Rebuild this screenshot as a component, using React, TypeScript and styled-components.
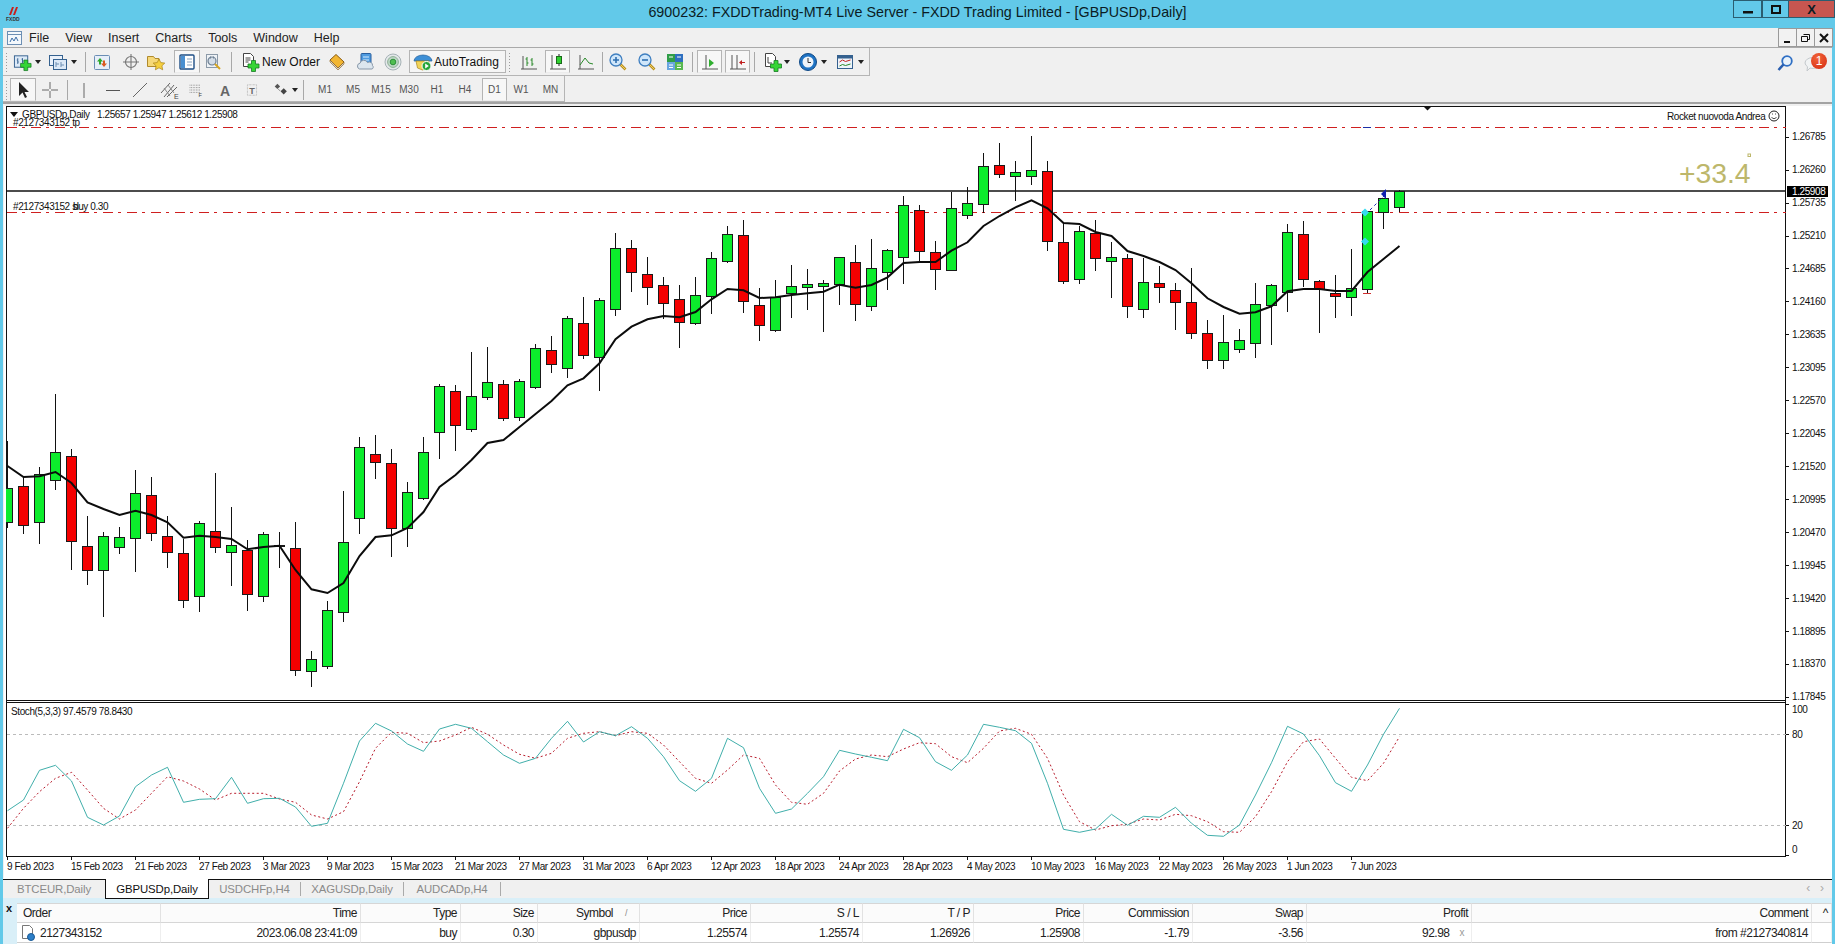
import styled, { createGlobalStyle } from 'styled-components';
import type { ReactNode } from 'react';

const GlobalStyle = createGlobalStyle`
  html, body { margin: 0; padding: 0; overflow: hidden; background: #62c9e9; }
  * { box-sizing: border-box; }
`;

const FONT = '"Liberation Sans", Arial, sans-serif';

const Win = styled.div`
  width: 1835px;
  height: 944px;
  background: #62c9e9;
  font-family: ${FONT};
  color: #111;
  display: flex;
  flex-direction: column;
  overflow: hidden;
`;
const TitleBar = styled.div`
  height: 28px;
  padding-bottom: 4px;
  position: relative;
  display: flex;
  align-items: center;
  justify-content: center;
  font-size: 14.3px;
  color: #0b1c24;
`;
const TitleLogo = styled.div`
  position: absolute;
  left: 5px;
  top: 6px;
`;
const WinBtns = styled.div`
  position: absolute;
  right: 0;
  top: 0;
  display: flex;
`;
const WinBtn = styled.div<{ $w: number; $close?: boolean }>`
  width: ${(p) => p.$w}px;
  height: 18px;
  background: ${(p) => (p.$close ? '#c75650' : '#62c9e9')};
  border: 1px solid #2b5d70;
  border-left-width: ${(p) => (p.$close ? 0 : 1)}px;
  display: flex;
  align-items: center;
  justify-content: center;
  font-size: 13px;
  font-weight: bold;
`;
const Inner = styled.div`
  flex: 1;
  margin: 0 3px;
  background: #f0f0f0;
  display: flex;
  flex-direction: column;
  min-height: 0;
`;
const MenuBar = styled.div`
  height: 20px;
  flex: none;
  border-bottom: 1px solid #a9a9a9;
  display: flex;
  align-items: center;
  gap: 16px;
  padding-left: 26px;
  position: relative;
  font-size: 12.5px;
  color: #222;
`;
const MenuIcon = styled.div`
  position: absolute;
  left: 3px;
  top: 1px;
`;
const MdiBtns = styled.div`
  position: absolute;
  right: -1px;
  top: 0;
  display: flex;
`;
const MdiBtn = styled.div`
  width: 19px;
  height: 19px;
  margin-left: -1px;
  border: 1px solid #9a9a9a;
  background: #f2f2f2;
  display: flex;
  align-items: center;
  justify-content: center;
`;
const ToolRow = styled.div<{ $h: number }>`
  height: ${(p) => p.$h}px;
  flex: none;
  display: flex;
  align-items: stretch;
  position: relative;
`;
const Toolbar = styled.div<{ $pt?: number }>`
  display: flex;
  align-items: center;
  padding-top: ${(p) => p.$pt ?? 0}px;
  border-right: 1px solid #b5b5b5;
  border-bottom: 1px solid #b5b5b5;
`;
const Grip = styled.div<{ $w: number }>`
  width: ${(p) => p.$w}px;
  height: 20px;
  background: radial-gradient(circle, #9a9a9a 0.7px, transparent 0.8px) 0 0 / 3px 3px;
  background-repeat: repeat-y;
  background-position: 2px 0;
`;
const Gap = styled.div<{ $w: number }>`
  width: ${(p) => p.$w}px;
  flex: none;
`;
const Sep = styled.div<{ $w: number }>`
  width: ${(p) => p.$w}px;
  flex: none;
  height: 20px;
  display: flex;
  justify-content: center;
  &::before {
    content: '';
    width: 1px;
    background: #a8a8a8;
  }
`;
const Tool = styled.div<{ $w: number; $on?: boolean; $mr?: number }>`
  width: ${(p) => p.$w}px;
  height: ${(p) => (p.$on ? '23px' : '22px')};
  margin-right: ${(p) => p.$mr ?? 0}px;
  flex: none;
  display: flex;
  align-items: center;
  justify-content: center;
  border: 1px solid ${(p) => (p.$on ? '#b4b4b4' : 'transparent')};
  border-bottom-color: ${(p) => (p.$on ? '#ececec' : 'transparent')};
  background: ${(p) => (p.$on ? '#f7f7f7' : 'transparent')};
  font-size: 10px;
  color: #555;
`;
const Caret = styled.div<{ $w: number }>`
  width: ${(p) => p.$w}px;
  flex: none;
  display: flex;
  justify-content: center;
  &::before {
    content: '';
    border: 3px solid transparent;
    border-top: 4px solid #222;
    border-bottom: 0;
  }
`;
const OrderBtn = styled.div`
  width: 88px;
  flex: none;
  display: flex;
  align-items: center;
  gap: 2px;
  padding-left: 4px;
  font-size: 12px;
`;
const AutoBtn = styled.div`
  width: 97px;
  height: 23px;
  flex: none;
  display: flex;
  align-items: center;
  gap: 1px;
  padding-left: 3px;
  border: 1px solid #b4b4b4;
  background: #f5f5f5;
  font-size: 12px;
`;
const RightIcons = styled.div`
  margin-left: auto;
  display: flex;
  align-items: center;
  gap: 8px;
  padding-right: 9px;
  padding-top: 3px;
  position: relative;
`;
const Badge = styled.div`
  position: absolute;
  right: 5px;
  top: 5px;
  width: 16px;
  height: 16px;
  border-radius: 50%;
  background: radial-gradient(circle at 40% 30%, #f2643a, #d42a10);
  color: #fff;
  font-size: 12px;
  line-height: 16px;
  text-align: center;
`;
const ChartWrap = styled.div`
  height: 776px;
  flex: none;
  border-top: 2px solid #a3a3a3;
`;
const ChartSvg = styled.svg`
  display: block;
`;
const ChartText = styled.text<{ $light?: boolean }>`
  font-family: ${FONT};
  font-size: 10px;
  letter-spacing: -0.4px;
  fill: ${(p) => (p.$light ? '#fff' : '#111')};
`;
const ProfitText = styled.text`
  font-family: ${FONT};
  font-size: 28.3px;
  fill: #bdb76b;
`;
const TabStrip = styled.div`
  height: 20px;
  flex: none;
  display: flex;
  align-items: center;
  border-top: 1px solid #fff;
  box-shadow: inset 0 1px 0 #111;
  font-size: 11.4px;
  letter-spacing: -0.1px;
  color: #8a8a8a;
  position: relative;
`;
const Tab = styled.div<{ $w: number; $on?: boolean; $sep?: boolean }>`
  width: ${(p) => p.$w}px;
  height: ${(p) => (p.$on ? '20px' : '14px')};
  flex: none;
  display: flex;
  align-items: center;
  justify-content: center;
  ${(p) => (p.$on ? 'color:#111;background:#fff;border:1px solid #111;border-top:0;margin-top:1px;' : '')}
  ${(p) => (p.$sep ? 'border-right:1px solid #aaa;' : '')}
`;
const TabArrows = styled.div`
  position: absolute;
  right: 8px;
  top: 2px;
  display: flex;
  gap: 10px;
  color: #aaa;
  font-size: 12px;
`;
const Terminal = styled.div`
  flex: 1;
  display: flex;
  background: #d9eff8;
  padding-top: 5px;
  min-height: 0;
`;
const CloseX = styled.div`
  width: 14px;
  flex: none;
  padding: 0 0 0 3px;
  font-size: 11px;
  font-weight: bold;
  line-height: 10px;
`;
const Table = styled.div`
  flex: 1;
  display: grid;
  grid-template-columns: 144px 200px 100px 77px 102px 111px 112px 111px 110px 109px 114px 165px 340px 1fr;
  grid-template-rows: 20px 20px;
  font-size: 12px;
  letter-spacing: -0.5px;
  background: #fff;
`;
const Head = styled.div<{ $left?: boolean; $pr?: number }>`
  display: flex;
  align-items: center;
  justify-content: ${(p) => (p.$left ? 'flex-start' : 'flex-end')};
  padding: 0 ${(p) => p.$pr ?? 3}px 0 6px;
  background: #fbfbfb;
  border-right: 1px solid #e2e2e2;
  border-bottom: 1px solid #d6d6d6;
  border-top: 1px solid #d6d6d6;
  white-space: nowrap;
  color: #222;
  position: relative;
`;
const SortMark = styled.span`
  position: absolute;
  right: 12px;
  color: #888;
  font-size: 9px;
`;
const Cell = styled(Head)`
  background: #fff;
  border-top: 0;
  border-right-color: #eeeeee;
  border-bottom-color: #cfcfcf;
`;
const OrderCell = styled(Cell)`
  padding-left: 3px;
  gap: 4px;
`;
const ProfitX = styled.span`
  color: #999;
  margin-left: 10px;
  margin-right: 4px;
  font-size: 10px;
`;

function I({ children, s = 20 }: { children: ReactNode; s?: number }) {
  return (
    <svg width={s} height={s} viewBox="0 0 20 20">
      {children}
    </svg>
  );
}

const Plus = ({ x, y }: { x: number; y: number }) => (
  <path
    d={`M${x + 3.5} ${y}h4v3.5h3.5v4h-3.5v3.5h-4v-3.5h-3.5v-4h3.5z`}
    fill="#35d535"
    stroke="#177a25"
    strokeWidth="0.8"
  />
);

const NewChartIcon = () => (
  <I>
    <rect x="1.5" y="3.5" width="14" height="12" fill="#dce9f7" stroke="#35618f" />
    <path d="M5 6v6M4 8h1M5 10h1M10 6v5M9 7h1M10 9h1" stroke="#35618f" fill="none" />
    <Plus x={8} y={8} />
  </I>
);
const ProfileIcon = () => (
  <I>
    <rect x="1.5" y="3.5" width="13" height="10" fill="#eaf1fa" stroke="#35618f" />
    <rect x="5.5" y="7.5" width="13" height="10" fill="#dce9f7" stroke="#35618f" />
    <path d="M8 10v5M8 12h3M13 10v5M13 13h3" stroke="#6f8fb2" fill="none" />
  </I>
);
const WatchIcon = () => (
  <I>
    <rect x="2.5" y="3.5" width="15" height="14" rx="1" fill="#e6eef8" stroke="#6a8db5" />
    <path d="M8 6l3 3.5H9v3H7v-3H5z" fill="#2ba82b" />
    <path d="M12 15l-3-3.5h2v-3h2v3h2z" fill="#d95a20" />
  </I>
);
const TargetIcon = () => (
  <I>
    <circle cx="10" cy="10" r="5.5" fill="none" stroke="#777" strokeWidth="1.2" />
    <path d="M10 2v16M2 10h16" stroke="#777" strokeWidth="1.1" />
  </I>
);
const FolderStarIcon = () => (
  <I>
    <path d="M1.5 4.5h6l1.5 2h4v8h-11.5z" fill="#f6d878" stroke="#b08a2c" />
    <path d="M13 7l1.8 3.6 4 .5-2.9 2.7.8 4-3.7-2-3.6 2 .7-4-2.9-2.7 4-.5z" fill="#f5cf3f" stroke="#a98218" strokeWidth="0.7" />
  </I>
);
const NavigatorIcon = () => (
  <I>
    <rect x="3" y="3" width="14" height="14" rx="1" fill="#fff" stroke="#1f4f86" strokeWidth="1.4" />
    <rect x="4" y="4" width="4" height="12" fill="#4a8fd0" />
    <path d="M10 7h5M10 10h5M10 13h5" stroke="#8aa3bf" />
  </I>
);
const TermIcon = () => (
  <I>
    <rect x="3.5" y="2.5" width="11" height="13" fill="#eef2f6" stroke="#8c9aa8" />
    <circle cx="9" cy="9" r="4" fill="#d5dee8" stroke="#6d7f92" strokeWidth="1.2" />
    <path d="M7.5 4.5v2M10.5 4.5v2" stroke="#6d7f92" />
    <path d="M12 12l5 5" stroke="#d7a520" strokeWidth="2" />
  </I>
);
const OrderIcon = () => (
  <I>
    <path d="M3.5 1.5h7l3 3v10h-10z" fill="#fff" stroke="#444" />
    <path d="M5.5 6h5M5.5 8h5M5.5 10h3" stroke="#444" />
    <Plus x={8} y={8.5} />
  </I>
);
const BookIcon = () => (
  <I>
    <path d="M3 8l6-5.5 8 7.5-6 6z" fill="#f2b632" stroke="#8a5a10" />
    <path d="M3 8v2l8 8 6-6v-2l-6 6z" fill="#d8d2c4" stroke="#8a5a10" strokeWidth="0.6" />
  </I>
);
const MarketIcon = () => (
  <I>
    <rect x="5" y="1.5" width="10" height="12" rx="1" fill="#4f9be0" stroke="#2a5f9e" />
    <path d="M7 5h6M7 8h6" stroke="#d5ecff" />
    <path d="M3.5 17a3 3 0 0 1 .5-5.8 4 4 0 0 1 7.5-.6 3.2 3.2 0 0 1 5 3 2 2 0 0 1-.5 3.4z" fill="#dce6ee" stroke="#8797a8" />
  </I>
);
const SignalIcon = () => (
  <I>
    <circle cx="10" cy="10" r="8" fill="#e4e8ea" stroke="#a6b2b6" />
    <circle cx="10" cy="10" r="5.4" fill="#bcd6c4" stroke="#8fb096" />
    <circle cx="10" cy="10" r="2.8" fill="#4fbf4f" stroke="#2f8f3a" />
  </I>
);
const AutoIcon = () => (
  <I>
    <path d="M1 9a9 6 0 0 1 18 0z" fill="#3d8fd6" stroke="#1f5e9c" strokeWidth="0.7" />
    <path d="M3 9h13l-1.5 7-5 2-5-2z" fill="#f2d45a" stroke="#a9851c" strokeWidth="0.7" />
    <circle cx="13.5" cy="14" r="4.5" fill="#27a53a" stroke="#fff" />
    <path d="M12.2 11.6l3.6 2.4-3.6 2.4z" fill="#fff" />
  </I>
);
const BarsIcon = () => (
  <I>
    <path d="M2 17h16M4 4v13" stroke="#555" fill="none" />
    <path d="M8 5v9M6.5 7h1.5M8 11h1.5M13 6v8M11.5 8h1.5M13 12h1.5" stroke="#2a8a2a" fill="none" />
  </I>
);
const CandlesIcon = () => (
  <I>
    <path d="M2 17h16M4 3v14" stroke="#555" fill="none" />
    <path d="M11 2v12" stroke="#222" />
    <rect x="8.5" y="4.5" width="5" height="7" fill="#2fd02f" stroke="#1a6a1a" />
  </I>
);
const LineIcon = () => (
  <I>
    <path d="M2 17h16M4 3v14" stroke="#555" fill="none" />
    <path d="M4 13l5-7 4 5 4 1" stroke="#2a8a2a" fill="none" />
  </I>
);
const ZoomIcon = ({ minus }: { minus?: boolean }) => (
  <I>
    <path d="M12 12l5.5 5.5" stroke="#b98f1e" strokeWidth="2.6" />
    <path d="M12 12l5.5 5.5" stroke="#f0d060" strokeWidth="1" />
    <circle cx="8" cy="8" r="6" fill="#cfe6fa" stroke="#3f7fc0" strokeWidth="1.3" />
    <path d={minus ? 'M5 8h6' : 'M5 8h6M8 5v6'} stroke="#2f6fb0" strokeWidth="1.6" />
  </I>
);
const TileIcon = () => (
  <I>
    <rect x="2" y="2" width="8" height="8" fill="#2f9e48" />
    <rect x="10" y="2" width="8" height="8" fill="#2e6fc0" />
    <rect x="2" y="10" width="8" height="8" fill="#6aa6e0" />
    <rect x="10" y="10" width="8" height="8" fill="#58b84f" />
    <path d="M4 5h4M12 5h4M4 13h4M12 13h4M4 15.5h4M12 15.5h4" stroke="#fff" />
  </I>
);
const ScrollIcon = () => (
  <I>
    <path d="M2 17h16M6 3v14" stroke="#555" fill="none" />
    <path d="M9 7l5 4-5 4z" fill="#2faf2f" />
  </I>
);
const ShiftIcon = () => (
  <I>
    <path d="M2 17h16M4 3v14M9 3v14" stroke="#555" fill="none" />
    <path d="M17 10.5h-4" stroke="#c02020" />
    <path d="M11 10.5l3-2.5v5z" fill="#c02020" />
  </I>
);
const AddIndIcon = () => (
  <I>
    <path d="M3.5 1.5h7l3 3v10h-10z" fill="#fff" stroke="#444" />
    <path d="M6 5v6h4" stroke="#444" fill="none" />
    <Plus x={8.5} y={8.5} />
  </I>
);
const ClockIcon = () => (
  <I>
    <circle cx="10" cy="10" r="8.5" fill="#1f73c4" stroke="#114a86" />
    <circle cx="10" cy="10" r="5.5" fill="#eef4fa" />
    <path d="M10 6v4.5h3" stroke="#333" fill="none" />
  </I>
);
const TemplateIcon = () => (
  <I>
    <rect x="2.5" y="3.5" width="15" height="13" fill="#eef4fa" stroke="#35618f" />
    <rect x="3" y="4" width="14" height="2.5" fill="#35618f" />
    <path d="M4.5 10l3-2 3 1.5 5-1.5" stroke="#c02020" fill="none" />
    <path d="M4.5 14l3-1.5 3 1 5-1.5" stroke="#2a8a2a" fill="none" />
  </I>
);
const CursorIcon = () => (
  <I>
    <path d="M6 2v14l3.5-3.5 2.5 5.5 2-1-2.5-5h4.5z" fill="#222" />
  </I>
);
const CrossIcon = () => (
  <I>
    <path d="M10 2v7M10 11v7M2 10h7M11 10h7" stroke="#666" />
  </I>
);
const VLineIcon = () => (
  <I>
    <path d="M10 3v15" stroke="#666" />
  </I>
);
const HLineIcon = () => (
  <I>
    <path d="M3 10.5h14" stroke="#555" />
  </I>
);
const TrendIcon = () => (
  <I>
    <path d="M3 17L17 3" stroke="#666" />
  </I>
);
const ChannelIcon = () => (
  <I>
    <path d="M1 13L10 3M4 17L14 5M7 17L17 7" stroke="#666" fill="none" />
    <path d="M4 8l6 8M8 5l6 8" stroke="#888" fill="none" />
    <text x="14" y="19" fontSize="7" fontFamily={FONT} fill="#444">E</text>
  </I>
);
const FiboIcon = () => (
  <I>
    <path d="M2 4h13M2 7h13M2 10h13M2 13h13" stroke="#777" strokeDasharray="1 1" />
    <text x="13" y="19" fontSize="7" fontFamily={FONT} fill="#444">F</text>
  </I>
);
const TextAIcon = () => (
  <I>
    <text x="10" y="15.5" fontSize="14" fontWeight="bold" textAnchor="middle" fontFamily={FONT} fill="#666">A</text>
  </I>
);
const LabelTIcon = () => (
  <I>
    <rect x="3.5" y="2.5" width="13" height="15" fill="none" stroke="#999" strokeDasharray="1 1" />
    <text x="10" y="15" fontSize="13" fontWeight="bold" textAnchor="middle" fontFamily={FONT} fill="#666">T</text>
  </I>
);
const ArrowsIcon = () => (
  <I>
    <path d="M6 3l3 3-3 3-3-3z" fill="#555" />
    <path d="M13 8l3.5 3.5-3.5 3.5-3.5-3.5z" fill="#444" />
    <path d="M7 9l2 2" stroke="#777" />
  </I>
);
const SearchIcon = () => (
  <I>
    <circle cx="12" cy="7" r="4.8" fill="#e8f2fb" stroke="#2f6fc4" strokeWidth="1.8" />
    <path d="M8.5 10.5L3.5 16" stroke="#2a5fb0" strokeWidth="2.6" />
  </I>
);
const BubbleIcon = () => (
  <I>
    <path d="M2 9a8 5.5 0 0 1 16 0 8 5.5 0 0 1-11 5l-3 3 .5-4.3A5.500 5.500 0 0 1 2 9z" fill="#f1f3f4" stroke="#c3c8cc" />
  </I>
);
const DocIcon = () => (
  <svg width="16" height="17" viewBox="0 0 16 17">
    <path d="M2.5 1.5h7l3 3v10h-10z" fill="#fff" stroke="#777" />
    <circle cx="11" cy="13" r="3.5" fill="#2c7fc8" stroke="#1a5a96" />
  </svg>
);
const AppMenuIcon = () => (
  <svg width="17" height="18" viewBox="0 0 17 18">
    <rect x="1.5" y="2.5" width="14" height="13" fill="#f4f8fc" stroke="#6d8fb4" />
    <path d="M1.5 5.5h14" stroke="#6d8fb4" />
    <path d="M4 13l2-4 2 3 2-4 2 4" stroke="#3d6fa8" fill="none" />
  </svg>
);
const FxddLogo = () => (
  <svg width="16" height="17" viewBox="0 0 16 17">
    <path d="M4 9l3-8h2l-3 8zM8 9l3-8h2l-3 8z" fill="#c8201c" />
    <text x="1" y="15" fontSize="5" fontWeight="bold" fontFamily={FONT} fill="#333">FXDD</text>
  </svg>
);

type Raw = [number, number, number, number, 'g' | 'r'];
const seg = (ox: number, rows: Raw[]) =>
  rows.map(([a, b, c, d, k]) => [ox + a / 3, ox + b / 3, ox + c / 3, ox + d / 3, k] as const);

const candles = [
  ...seg(400, [
    [120, 265, 367, 380, 'g'], [225, 259, 376, 398, 'r'], [198, 223, 367, 428, 'g'],
    [-21, 157, 241, 266, 'g'], [145, 169, 424, 506, 'r'], [346, 439, 512, 551, 'r'],
    [394, 409, 512, 647, 'g'], [379, 412, 442, 458, 'g'], [208, 280, 415, 512, 'g'],
    [229, 286, 400, 421, 'r'], [346, 409, 457, 500, 'r'], [415, 460, 601, 622, 'r'],
    [361, 370, 589, 632, 'g'], [216, 394, 442, 455, 'r'], [319, 436, 457, 554, 'g'],
    [418, 451, 583, 629, 'r'], [394, 403, 589, 602, 'g'], [394, 435, 437, 500, 'g'],
    [364, 445, 811, 824, 'r'], [751, 778, 814, 857, 'g'], [601, 631, 799, 803, 'g'],
    [271, 427, 637, 662, 'g'], [109, 142, 355, 398, 'g'], [103, 163, 187, 234, 'r'],
    [145, 190, 385, 467, 'r'], [244, 277, 385, 437, 'g'], [109, 157, 295, 297, 'g'],
    [-51, -42, 97, 173, 'g'], [-47, -27, 76, 149, 'r'], [-147, -11, 88, 94, 'g'],
    [-162, -53, -8, -3, 'g'], [-62, -47, 55, 60, 'r'], [-65, -56, 53, 60, 'g'],
  ]),
  ...seg(120, [
    [670, 685, 802, 805, 'g'], [646, 691, 733, 757, 'r'], [586, 595, 745, 772, 'g'],
    [529, 610, 706, 715, 'r'], [530, 541, 712, 811, 'g'], [337, 385, 568, 584, 'g'],
    [358, 385, 457, 512, 'r'], [409, 463, 502, 551, 'r'], [469, 496, 550, 595, 'r'],
    [493, 538, 607, 680, 'r'], [469, 526, 610, 613, 'g'], [394, 415, 529, 578, 'g'],
    [316, 343, 424, 427, 'g'], [298, 346, 544, 575, 'r'], [502, 556, 616, 661, 'r'],
    [478, 532, 631, 634, 'g'], [433, 499, 520, 590, 'g'], [445, 493, 502, 566, 'g'],
    [478, 490, 499, 634, 'g'], [412, 412, 493, 553, 'g'], [373, 427, 553, 599, 'r'],
    [355, 445, 559, 569, 'g'], [385, 391, 457, 506, 'g'], [226, 256, 412, 488, 'g'],
    [253, 271, 394, 424, 'r'], [361, 397, 448, 506, 'r'], [214, 265, 451, 451, 'g'],
    [199, 250, 286, 295, 'g'], [97, 139, 253, 277, 'g'], [67, 136, 163, 172, 'r'],
    [121, 157, 169, 239, 'g'], [46, 151, 169, 193, 'g'], [121, 154, 364, 391, 'r'],
    [310, 367, 485, 490, 'r'], [316, 334, 478, 490, 'g'], [298, 340, 415, 451, 'r'],
    [364, 412, 424, 532, 'g'], [400, 415, 559, 590, 'r'], [412, 487, 568, 590, 'g'],
    [436, 490, 502, 547, 'r'], [487, 511, 547, 626, 'r'], [442, 547, 640, 653, 'r'],
    [598, 640, 721, 745, 'r'], [583, 667, 721, 743, 'g'], [625, 661, 688, 697, 'g'],
    [487, 553, 670, 710, 'g'], [490, 496, 556, 671, 'g'], [310, 337, 517, 572, 'g'],
    [301, 343, 478, 497, 'r'], [478, 484, 508, 635, 'r'], [463, 520, 529, 590, 'r'],
    [385, 505, 532, 584, 'g'], [274, 274, 508, 517, 'g'], [235, 235, 277, 323, 'g'],
    [208, 214, 262, 272, 'g'],
  ]),
];

const ma = [
  ...[198, 231, 229, 216, 249, 307, 327, 345, 332, 345, 367, 413, 407, 411, 417, 448, 441, 437, 510, 568, 579, 549,
    468, 411, 406, 384, 336, 261, 225, 180, 129, 120].map((v) => 400 + v / 3),
  427, 414, 401,
  ...[796, 775, 730, 658, 620, 598, 588, 592, 576, 538, 507, 511, 534, 532, 525, 520, 515, 494, 503, 495, 472, 429,
    426, 426, 392, 367, 318, 288, 262, 241, 265, 309, 312, 336, 348, 393, 408, 426, 450, 490, 535, 561, 581, 577, 559,
    514, 507, 507, 513, 513, 456, 417, 378].map((v) => 120 + v / 3),
];

const stochMain = [
  347, 315, 226, 211, 258, 367, 390, 363, 275, 240, 217, 322, 313, 311, 247, 325, 311, 310, 336, 394, 385, 265, 138,
  85, 108, 147, 169, 102, 88, 100, 140, 180, 205, 190, 130, 79, 141, 110, 122, 95, 130, 185, 257, 289, 250, 130, 158,
  280, 355, 342, 295, 245, 166, 177, 187, 197, 103, 128, 200, 226, 180, 88, 97, 107, 145, 265, 403, 412, 402, 358,
  391, 364, 367, 337, 385, 421, 424, 390, 300, 203, 94, 117, 182, 263, 289, 210, 118, 40,
];
const stochSignal = [
  400, 340, 290, 250, 232, 285, 340, 372, 345, 295, 245, 258, 282, 315, 295, 295, 295, 312, 322, 360, 372, 350, 260,
  160, 112, 115, 143, 138, 120, 97, 118, 150, 178, 190, 175, 130, 115, 110, 122, 110, 115, 150, 200, 250, 265, 225,
  180, 190, 270, 322, 328, 295, 228, 192, 180, 185, 162, 143, 146, 185, 203, 160, 108, 100, 118, 190, 300, 380, 405,
  392, 388, 372, 375, 358, 362, 380, 410, 412, 365, 290, 200, 140, 132, 190, 247, 257, 205, 125,
];

const prices = [
  '1.26785', '1.26260', '1.25735', '1.25210', '1.24685', '1.24160', '1.23635', '1.23095', '1.22570', '1.22045',
  '1.21520', '1.20995', '1.20470', '1.19945', '1.19420', '1.18895', '1.18370', '1.17845',
];
const dates = [
  '9 Feb 2023', '15 Feb 2023', '21 Feb 2023', '27 Feb 2023', '3 Mar 2023', '9 Mar 2023', '15 Mar 2023', '21 Mar 2023',
  '27 Mar 2023', '31 Mar 2023', '6 Apr 2023', '12 Apr 2023', '18 Apr 2023', '24 Apr 2023', '28 Apr 2023', '4 May 2023',
  '10 May 2023', '16 May 2023', '22 May 2023', '26 May 2023', '1 Jun 2023', '7 Jun 2023',
];
const cx = (i: number) => 7.5 + 16 * i;
const snap = (v: number) => Math.round(v) + 0.5;
const pts = (ys: number[]) => ys.map((y, i) => `${cx(i)},${y.toFixed(1)}`).join(' ');

function Chart() {
  return (
    <ChartSvg width={1829} height={774} viewBox="3 104 1829 774">
      <defs>
        <clipPath id="pane">
          <rect x="6" y="106" width="1780" height="594" />
        </clipPath>
      </defs>
      <rect x="4" y="106" width="1828" height="772" fill="#fff" />
      <path d="M6.5 106.5H1785.5V856.5H6.5ZM6.5 700.5H1785.5M6.5 702.5H1785.5" fill="none" stroke="#111" shapeRendering="crispEdges" />

      <path d="M7 127.5H1786M7 212.5H1786" stroke="#cf1f1f" strokeDasharray="10 5 3 6" shapeRendering="crispEdges" />
      <path d="M7 191H1786" stroke="#111" strokeWidth="1.3" />

      <g clipPath="url(#pane)" shapeRendering="crispEdges">
        {candles.map(([wt, bt, bb, wb, k], i) => (
          <g key={i}>
            <line x1={cx(i)} x2={cx(i)} y1={snap(wt)} y2={snap(wb)} stroke="#111" />
            <rect
              x={cx(i) - 5}
              y={snap(bt)}
              width={10}
              height={Math.max(1, Math.round(bb - bt))}
              fill={k === 'g' ? '#0cec2c' : '#f40000'}
              stroke="#1a1a1a"
            />
          </g>
        ))}
      </g>
      <polyline points={pts(ma)} fill="none" stroke="#0c0c0c" strokeWidth="2" />

      <path d="M1370 210l15-15" stroke="#2233bb" strokeDasharray="3 3" />
      <path d="M1381 194l5-5v10z" fill="#1020b0" />
      <path d="M1365 208.5l4 4-4 4-4-4zM1365 237.5l4 4-4 4-4-4z" fill="#35dcf0" />
      <path d="M1363 293.5h8" stroke="#d03030" />
      <path d="M1363 127.5h8" stroke="#1a2fa8" />
      <path d="M1423 106l4.5 4.5 4.5-4.5z" fill="#111" />

      <path d="M10 112h8l-4 5z" fill="#111" />
      <ChartText x={22} y={118}>GBPUSDp,Daily</ChartText>
      <ChartText x={97} y={118}>1.25657 1.25947 1.25612 1.25908</ChartText>
      <ChartText x={13} y={126}>#2127343152 tp</ChartText>
      <ChartText x={13} y={210}>#2127343152 sl</ChartText>
      <ChartText x={73} y={210}>buy 0.30</ChartText>
      <ChartText x={1667} y={120}>Rocket nuovoda Andrea</ChartText>
      <circle cx="1774" cy="116" r="5" fill="none" stroke="#222" />
      <path d="M1771.5 117.5q2.5 2.5 5 0M1772 114h1M1775 114h1" stroke="#222" fill="none" strokeWidth="0.8" />

      <ProfitText x={1679} y={182.5}>+33.4</ProfitText>
      <rect x="1748" y="154" width="2.5" height="2.5" fill="none" stroke="#bdb76b" />

      {prices.map((p, i) => {
        const y = 136.7 + 32.94 * i;
        return (
          <g key={p}>
            <path d={`M1786 ${snap(y)}h3`} stroke="#111" />
            <ChartText x={1792} y={y + 3.7}>{p}</ChartText>
          </g>
        );
      })}
      <rect x="1787" y="186" width="41" height="11" fill="#000" />
      <ChartText x={1792} y={195} $light>1.25908</ChartText>

      <path d="M7 734.5H1786M7 825.5H1786" stroke="#bbb" strokeDasharray="3 3" shapeRendering="crispEdges" />
      <ChartText x={11} y={715}>Stoch(5,3,3) 97.4579 78.8430</ChartText>
      <polyline points={pts(stochSignal.map((v) => 695 + v / 3))} fill="none" stroke="#b81c2c" strokeWidth="1" strokeDasharray="2 2.5" />
      <polyline points={pts(stochMain.map((v) => 695 + v / 3))} fill="none" stroke="#2aa5a0" strokeWidth="0.9" />
      <path d="M1786 704.5h3M1786 734.5h3M1786 825.5h3M1786 855.5h3" stroke="#111" />
      <ChartText x={1792} y={713}>100</ChartText>
      <ChartText x={1792} y={738}>80</ChartText>
      <ChartText x={1792} y={829}>20</ChartText>
      <ChartText x={1792} y={853}>0</ChartText>

      {dates.map((d, i) => (
        <g key={d}>
          <path d={`M${7.5 + 64 * i} 857v3`} stroke="#111" />
          <ChartText x={7 + 64 * i} y={869.5}>{d}</ChartText>
        </g>
      ))}
    </ChartSvg>
  );
}

const frames: [string, number, boolean?, number?][] = [
  ['M1', 28], ['M5', 28], ['M15', 28], ['M30', 28], ['H1', 28], ['H4', 28, false, 3], ['D1', 25, true, 0], ['W1', 28, false, 2], ['MN', 27],
];
const menus = ['File', 'View', 'Insert', 'Charts', 'Tools', 'Window', 'Help'];
const columns = ['Time', 'Type', 'Size', 'Symbol', 'Price', 'S / L', 'T / P', 'Price', 'Commission', 'Swap', 'Profit', 'Comment'];
const row = ['2023.06.08 23:41:09', 'buy', '0.30', 'gbpusdp', '1.25574', '1.25574', '1.26926', '1.25908', '-1.79', '-3.56'];

export default function App() {
  return (
    <Win>
      <GlobalStyle />
      <TitleBar>
        <TitleLogo><FxddLogo /></TitleLogo>
        6900232: FXDDTrading-MT4 Live Server - FXDD Trading Limited - [GBPUSDp,Daily]
        <WinBtns>
          <WinBtn $w={29}>
            <svg width="10" height="10"><rect x="0" y="7" width="10" height="2.5" fill="#111" /></svg>
          </WinBtn>
          <WinBtn $w={27}>
            <svg width="10" height="9"><rect x="1" y="1" width="8" height="7" fill="none" stroke="#111" strokeWidth="2" /></svg>
          </WinBtn>
          <WinBtn $w={46} $close>X</WinBtn>
        </WinBtns>
      </TitleBar>
      <Inner>
        <MenuBar>
          <MenuIcon><AppMenuIcon /></MenuIcon>
          {menus.map((m) => <span key={m}>{m}</span>)}
          <MdiBtns>
            <MdiBtn><svg width="10" height="10"><rect x="1" y="8" width="6" height="2" fill="#111" /></svg></MdiBtn>
            <MdiBtn>
              <svg width="11" height="11"><path d="M3.5 2.5h6v5h-2M1.5 4.5h6v5h-6z" fill="none" stroke="#111" /></svg>
            </MdiBtn>
            <MdiBtn><svg width="10" height="10"><path d="M1 1l8 8M9 1l-8 8" stroke="#111" strokeWidth="2" /></svg></MdiBtn>
          </MdiBtns>
        </MenuBar>
        <ToolRow $h={28}>
          <Toolbar>
            <Grip $w={9} />
            <Tool $w={21}><NewChartIcon /></Tool>
            <Caret $w={9} />
            <Gap $w={5} />
            <Tool $w={22}><ProfileIcon /></Tool>
            <Caret $w={10} />
            <Sep $w={12} />
            <Tool $w={22}><WatchIcon /></Tool>
            <Gap $w={5} />
            <Tool $w={26}><TargetIcon /></Tool>
            <Tool $w={24}><FolderStarIcon /></Tool>
            <Gap $w={6} />
            <Tool $w={26} $on><NavigatorIcon /></Tool>
            <Tool $w={26}><TermIcon /></Tool>
            <Sep $w={10} />
            <OrderBtn><OrderIcon />New Order</OrderBtn>
            <Tool $w={26}><BookIcon /></Tool>
            <Gap $w={3} />
            <Tool $w={26}><MarketIcon /></Tool>
            <Tool $w={28}><SignalIcon /></Tool>
            <Gap $w={2} />
            <AutoBtn><AutoIcon />AutoTrading</AutoBtn>
            <Grip $w={8} />
            <Gap $w={3} />
            <Tool $w={24}><BarsIcon /></Tool>
            <Gap $w={4} />
            <Tool $w={25} $on><CandlesIcon /></Tool>
            <Gap $w={4} />
            <Tool $w={24}><LineIcon /></Tool>
            <Sep $w={8} />
            <Tool $w={24}><ZoomIcon /></Tool>
            <Gap $w={5} />
            <Tool $w={24}><ZoomIcon minus /></Tool>
            <Gap $w={4} />
            <Tool $w={24}><TileIcon /></Tool>
            <Sep $w={10} />
            <Tool $w={25} $on><ScrollIcon /></Tool>
            <Gap $w={3} />
            <Tool $w={25} $on><ShiftIcon /></Tool>
            <Sep $w={8} />
            <Gap $w={3} />
            <Tool $w={22}><AddIndIcon /></Tool>
            <Caret $w={8} />
            <Gap $w={5} />
            <Tool $w={24}><ClockIcon /></Tool>
            <Caret $w={7} />
            <Gap $w={6} />
            <Tool $w={24}><TemplateIcon /></Tool>
            <Caret $w={8} />
            <Gap $w={4} />
          </Toolbar>
          <RightIcons>
            <SearchIcon />
            <BubbleIcon />
            <Badge>1</Badge>
          </RightIcons>
        </ToolRow>
        <ToolRow $h={26}>
          <Toolbar $pt={2}>
            <Grip $w={7} />
            <Tool $w={26} $on><CursorIcon /></Tool>
            <Tool $w={28}><CrossIcon /></Tool>
            <Sep $w={6} />
            <Tool $w={28}><VLineIcon /></Tool>
            <Gap $w={1} />
            <Tool $w={28}><HLineIcon /></Tool>
            <Tool $w={26}><TrendIcon /></Tool>
            <Tool $w={34}><ChannelIcon /></Tool>
            <Tool $w={18}><FiboIcon /></Tool>
            <Tool $w={39}><TextAIcon /></Tool>
            <Tool $w={16}><LabelTIcon /></Tool>
            <Gap $w={11} />
            <Tool $w={20}><ArrowsIcon /></Tool>
            <Caret $w={8} />
            <Sep $w={9} />
            <Grip $w={3} />
            {frames.map(([t, w, on, mr]) => (
              <Tool key={t} $w={w} $on={on} $mr={mr}>{t}</Tool>
            ))}
          </Toolbar>
        </ToolRow>
        <ChartWrap><Chart /></ChartWrap>
        <TabStrip>
          <Tab $w={102}>BTCEUR,Daily</Tab>
          <Tab $w={104} $on>GBPUSDp,Daily</Tab>
          <Tab $w={92} $sep>USDCHFp,H4</Tab>
          <Tab $w={103} $sep>XAGUSDp,Daily</Tab>
          <Tab $w={97} $sep>AUDCADp,H4</Tab>
          <TabArrows><span>‹</span><span>›</span></TabArrows>
        </TabStrip>
        <Terminal>
          <CloseX>x</CloseX>
          <Table>
            <Head $left>Order</Head>
            {columns.map((c, i) => (
              <Head key={i} $pr={c === 'Symbol' ? 26 : undefined}>
                {c}
                {c === 'Symbol' && <SortMark>/</SortMark>}
              </Head>
            ))}
            <Head>^</Head>
            <OrderCell $left><DocIcon />2127343152</OrderCell>
            {row.map((v, i) => <Cell key={i}>{v}</Cell>)}
            <Cell>92.98<ProfitX>x</ProfitX></Cell>
            <Cell>from #2127340814</Cell>
            <Cell />
          </Table>
        </Terminal>
      </Inner>
    </Win>
  );
}
